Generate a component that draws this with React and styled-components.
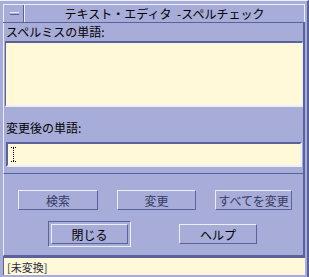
import styled, { createGlobalStyle } from "styled-components";

const BG = "#a8acd8";
const DARK = "#5a629c";
const LIGHT = "#eceef8";
const FIELD = "#fff9da";

const Global = createGlobalStyle`
  html, body { margin: 0; padding: 0; background: ${BG}; }
  body {
    font-family: "Noto Sans CJK JP", "DejaVu Sans", sans-serif;
    font-size: 12px;
    color: #000;
  }
`;

const Window = styled.div`
  width: 309px;
  height: 277px;
  box-sizing: border-box;
  padding: 3px 2px 0 3px;
  display: flex;
  flex-direction: column;
  background: ${BG};
  border-top: 1px solid ${LIGHT};
  border-right: 2px solid ${DARK};
`;

const TitleBar = styled.div`
  height: 19px;
  display: flex;
  border-top: 1px solid ${LIGHT};
  border-bottom: 1px solid ${DARK};
  box-sizing: border-box;
`;

const MenuButton = styled.div`
  width: 18px;
  display: flex;
  align-items: center;
  justify-content: center;
  padding-left: 1px;
  border-left: 1px solid ${LIGHT};
  border-right: 1px solid ${DARK};
  &::after {
    content: "";
    width: 9px;
    height: 1px;
    background: ${BG};
    border-top: 1px solid ${LIGHT};
    border-bottom: 1px solid ${DARK};
  }
`;

const Title = styled.div`
  flex: 1;
  text-align: center;
  line-height: 17px;
  font-size: 12px;
  word-spacing: 3px;
  border-left: 1px solid ${LIGHT};
  border-right: 1px solid ${LIGHT};
`;

const Panel = styled.div`
  display: flex;
  flex-direction: column;
  border-left: 1px solid ${LIGHT};
  border-right: 2px solid ${DARK};
  border-bottom: 1px solid ${DARK};
  height: ${(p) => p.$h}px;
  box-sizing: border-box;
  padding: 0 0 0 1px;
`;

const Label = styled.div`
  height: ${(p) => p.$h}px;
  display: flex;
  align-items: flex-end;
  padding-left: 1px;
  padding-bottom: ${(p) => p.$pb}px;
  box-sizing: border-box;
  line-height: 14px;
`;

const ListBox = styled.div`
  height: 66px;
  background: ${FIELD};
  border-top: 2px solid ${DARK};
  border-left: 1px solid ${DARK};
  border-right: 1px solid ${LIGHT};
  border-bottom: 2px solid ${LIGHT};
  box-sizing: border-box;
`;

const TextField = styled.div`
  height: 25px;
  margin: 0 1px;
  background: ${FIELD};
  border-top: 2px solid ${DARK};
  border-left: 2px solid ${DARK};
  border-right: 2px solid ${LIGHT};
  border-bottom: 2px solid ${LIGHT};
  box-sizing: border-box;
  display: flex;
  align-items: center;
  padding-left: 3px;
`;

const Caret = styled.div`
  width: 5px;
  height: 15px;
  border-top: 1px dotted #000;
  border-bottom: 1px dotted #000;
  box-sizing: border-box;
  position: relative;
  &::after {
    content: "";
    position: absolute;
    left: 2px;
    top: 0;
    height: 13px;
    border-left: 1px dotted #000;
  }
`;

const ButtonRow = styled.div`
  display: flex;
  gap: ${(p) => p.$gap}px;
  padding-left: ${(p) => p.$pl}px;
  margin-top: ${(p) => p.$mt}px;
  align-items: center;
`;

const Button = styled.div`
  width: ${(p) => p.$w}px;
  height: 20px;
  box-sizing: border-box;
  border-top: 1px solid ${LIGHT};
  border-left: 1px solid ${LIGHT};
  border-right: 1px solid ${DARK};
  border-bottom: 1px solid ${DARK};
  display: flex;
  align-items: center;
  justify-content: center;
  font-size: 12px;
  color: ${(p) => (p.$disabled ? "#353a62" : "#000")};
`;

const DefaultRing = styled.div`
  padding: 2px;
  border-top: 1px solid ${DARK};
  border-left: 1px solid ${DARK};
  border-right: 1px solid ${LIGHT};
  border-bottom: 1px solid ${LIGHT};
`;

const StatusBar = styled.div`
  flex: 1;
  border-top: 2px solid ${DARK};
  border-left: 1px solid ${DARK};
  background: ${FIELD};
  display: flex;
  align-items: center;
  padding-left: 3px;
  color: #2c2c3c;
  font-size: 11px;
  margin-bottom: 2px;
`;

export default function App() {
  return (
    <>
      <Global />
      <Window>
        <TitleBar>
          <MenuButton />
          <Title>テキスト・エディタ -スペルチェック</Title>
        </TitleBar>
        <Panel $h={151}>
          <Label $h={18} $pb={2}>スペルミスの単語:</Label>
          <ListBox />
          <Label $h={35} $pb={7}>変更後の単語:</Label>
          <TextField>
            <Caret />
          </TextField>
        </Panel>
        <Panel $h={82}>
          <ButtonRow $gap={19} $pl={13} $mt={16}>
            <Button $w={80} $disabled>検索</Button>
            <Button $w={79} $disabled>変更</Button>
            <Button $w={77} $disabled>すべてを変更</Button>
          </ButtonRow>
          <ButtonRow $gap={48} $pl={43} $mt={11}>
            <DefaultRing>
              <Button $w={77}>閉じる</Button>
            </DefaultRing>
            <Button $w={78}>ヘルプ</Button>
          </ButtonRow>
        </Panel>
        <StatusBar>[未変換]</StatusBar>
      </Window>
    </>
  );
}
